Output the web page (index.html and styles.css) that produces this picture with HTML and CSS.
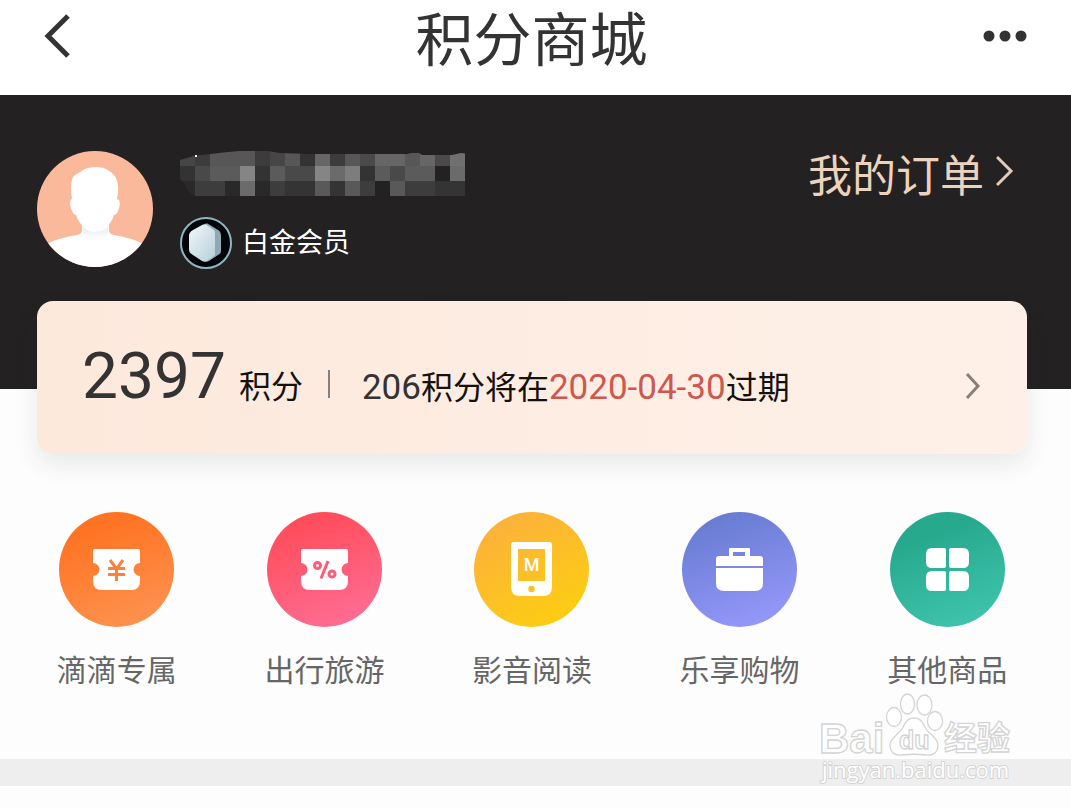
FILE: index.html
```html
<!DOCTYPE html>
<html lang="zh-CN">
<head>
<meta charset="utf-8">
<meta name="viewport" content="width=device-width, initial-scale=1">
<title>积分商城</title>
<link rel="stylesheet" href="styles.css">
</head>
<body>
<header class="topbar">
  <button class="icon-btn back" type="button" aria-label="返回">
    <svg width="28" height="46" viewBox="0 0 28 46" fill="none" stroke="#333" stroke-width="5"><path d="M24 3 4 23l20 20"/></svg>
  </button>
  <h1 class="title">积分商城</h1>
  <button class="icon-btn" type="button" aria-label="更多">
    <svg width="44" height="14" viewBox="0 0 44 14" fill="#333"><circle cx="6" cy="7" r="5.5"/><circle cx="22" cy="7" r="5.5"/><circle cx="38" cy="7" r="5.5"/></svg>
  </button>
</header>

<main class="page">
  <section class="hero">
    <svg class="avatar" viewBox="0 0 116 116" role="img" aria-label="头像">
      <defs>
        <clipPath id="avatar-clip"><circle cx="58" cy="58" r="58"/></clipPath>
        <linearGradient id="neck" x1="0" y1="0" x2="0" y2="1"><stop offset="0" stop-color="#e6edf1"/><stop offset="1" stop-color="#fff"/></linearGradient>
      </defs>
      <g clip-path="url(#avatar-clip)">
        <rect width="116" height="116" fill="#fab99b"/>
        <path fill="#fff" d="M45 70v9c0 3-1 4-5 5-11 2-21 4-30 9v23h96V93c-9-5-18-7-29-9-4-1-5-2-5-5v-9z"/>
        <path fill="url(#neck)" d="M46 76c8 6 17 6 25 0v8c-8 6-17 6-25 0z"/>
        <path fill="#fff" d="M35 48c-1-8-2-18 2-23 3-3 6-3 9-6 9-5 22-4 29 3 7 6 7 17 5 26 4 1 3 7 1 12-1 3-3 4-4 4-2 6-5 10-9 13-6 5-14 5-20 0-4-3-7-7-9-13-1 0-3-1-4-4-2-5-3-11 0-12z"/>
      </g>
    </svg>
    <div class="user">
      <svg class="masked-name" viewBox="0 0 285 45" role="img" aria-label="用户名已隐藏" shape-rendering="crispEdges">
        <clipPath id="mask-edge"><path d="M0 9 14 5l16-2 18-2 12-1h28l12 2 30 1h97l4-1h8l3 2h30l9-2 14 2v42H15L8 40 4 32 0 28z"/></clipPath>
        <g clip-path="url(#mask-edge)" fill="none" stroke-width="15">
          <g>
            <path stroke="#474647" d="M0 7.5h15M90 7.5h15"/><path stroke="#3d3c3d" d="M15 7.5h15M75 7.5h15M150 7.5h15"/><path stroke="#585758" d="M30 7.5h45M105 7.5h15M165 7.5h15M225 7.5h15"/><path stroke="#343334" d="M120 7.5h15"/><path stroke="#666" d="M135 7.5h15M195 7.5h30M240 7.5h15"/><path stroke="#4b4a4b" d="M180 7.5h15M255 7.5h15"/><path stroke="#707070" d="M270 7.5h15"/>
          </g>
          <g>
            <path stroke="#343334" d="M0 22.5h15M75 22.5h15M180 22.5h15"/><path stroke="#4a494a" d="M15 22.5h15M105 22.5h30M210 22.5h15"/><path stroke="#5c5b5c" d="M30 22.5h30M90 22.5h15M195 22.5h15M225 22.5h30"/><path stroke="#868586" d="M60 22.5h15M135 22.5h15"/><path stroke="#6c6b6c" d="M150 22.5h15M270 22.5h15"/><path stroke="#7e7d7e" d="M165 22.5h15"/>
          </g>
          <g>
            <path stroke="#2a292a" d="M0 37.5h15M45 37.5h15M75 37.5h15"/><path stroke="#3e3d3e" d="M15 37.5h30M90 37.5h15M180 37.5h15M225 37.5h30"/><path stroke="#6c6b6c" d="M60 37.5h15"/><path stroke="#353435" d="M105 37.5h30M150 37.5h15M255 37.5h30"/><path stroke="#5a595a" d="M135 37.5h15M165 37.5h15M210 37.5h15"/>
          </g>
        </g>
        <rect x="15" y="4" width="2" height="2" fill="#fff"/>
      </svg>
      <div class="level">
        <svg class="badge" viewBox="0 0 52 52" aria-hidden="true">
          <defs><linearGradient id="gem" x1="0" y1="0" x2="1" y2="1"><stop offset="0" stop-color="#f2f7f9"/><stop offset="1" stop-color="#b5d0da"/></linearGradient></defs>
          <circle cx="26" cy="26" r="25" fill="#020408" stroke="#8db5c3" stroke-width="2"/>
          <path fill="#8fa9b5" d="M25 7c2-1 3 0 5 1l8 5c2 1 3 3 3 6v15c0 2-1 3-3 4l-9 6c-2 1-3 1-5 0z"/>
          <path fill="#c5d6dd" d="m29 9 6 5v24l-6 5z"/>
          <path fill="url(#gem)" d="M22 8c2-1 4-1 6 1l5 4c2 1 2 3 2 5v16c0 2-1 4-3 5l-5 5c-2 1-3 1-5 0l-9-6c-3-2-4-3-4-6V19c0-3 1-4 4-6z"/>
        </svg>
        <span>白金会员</span>
      </div>
    </div>
    <a class="orders" href="#orders">我的订单
      <svg width="18" height="32" viewBox="0 0 18 32" fill="none" stroke="#e5ccba" stroke-width="3"><path d="m1 2 14 14L1 30"/></svg>
    </a>
  </section>

  <a class="points" href="#points">
    <strong class="balance">2397</strong>
    <span class="unit">积分</span>
    <span class="divider"></span>
    <span class="expiry"><span class="digits">206</span>积分将在<time class="digits date" datetime="2020-04-30">2020-04-30</time>过期</span>
    <svg class="chevron" width="16" height="28" viewBox="0 0 16 28" fill="none" stroke="#86807b" stroke-width="3"><path d="m2 2 11 12L2 26"/></svg>
  </a>

  <nav class="categories" aria-label="商品分类">
    <a class="category" href="#didi">
      <svg class="disc orange" viewBox="0 0 115 115" aria-hidden="true">
        <path fill="#fff" d="M36 37h43q2 0 2 2v12a6.500 6.500 0 0 0 0 13v5q0 9-9 9H43q-9 0-9-9v-5a6.500 6.500 0 0 0 0-13V39q0-2 2-2z"/>
        <path fill="none" stroke="#fd8138" stroke-width="3" d="m51 48 6.500 9 6.500-9M49 56.500h17M49 62.500h17M57.500 56v13"/>
      </svg>
      <span>滴滴专属</span>
    </a>
    <a class="category" href="#travel">
      <svg class="disc red" viewBox="0 0 115 115" aria-hidden="true">
        <path fill="#fff" d="M36 37h43q2 0 2 2v12a6.500 6.500 0 0 0 0 13v5q0 9-9 9H43q-9 0-9-9v-5a6.500 6.500 0 0 0 0-13V39q0-2 2-2z"/>
        <g fill="none" stroke="#fd5c76" stroke-width="3"><circle cx="50.500" cy="53.500" r="3"/><circle cx="65" cy="62" r="3"/><path d="m61 49-7 17.500"/></g>
      </svg>
      <span>出行旅游</span>
    </a>
    <a class="category" href="#media">
      <svg class="disc yellow" viewBox="0 0 115 115" aria-hidden="true">
        <path fill="#fff" fill-rule="evenodd" d="M40 30h35q3 0 3 3v42q0 9-9 9H46q-9 0-9-9V33q0-3 3-3zm4 7v32h27V37z"/>
        <circle cx="57.500" cy="77" r="3.200" fill="#fdc024"/>
        <text class="glyph-m" x="57.500" y="59" text-anchor="middle" fill="#fff">M</text>
      </svg>
      <span>影音阅读</span>
    </a>
    <a class="category" href="#shopping">
      <svg class="disc blue" viewBox="0 0 115 115" aria-hidden="true">
        <path fill="#fff" d="M37 44h10v-7q0-1 1-1h19q1 0 1 1v7h10q3 0 3 3v7H34v-7q0-3 3-3zm14 0h12v-4H51zM34 56h47v15q0 8-8 8H42q-8 0-8-8z"/>
      </svg>
      <span>乐享购物</span>
    </a>
    <a class="category" href="#others">
      <svg class="disc green" viewBox="0 0 115 115" aria-hidden="true">
        <path fill="#fff" d="M42 36h12q2 0 2 2v16q0 2-2 2H42q-6 0-6-6v-8q0-6 6-6zM61 36h12q6 0 6 6v8q0 6-6 6H61q-2 0-2-2V38q0-2 2-2zM42 59h12q2 0 2 2v16q0 2-2 2H42q-6 0-6-6v-8q0-6 6-6zM61 59h12q6 0 6 6v8q0 6-6 6H61q-2 0-2-2V61q0-2 2-2z"/>
      </svg>
      <span>其他商品</span>
    </a>
  </nav>
  <div class="band"></div>

  <svg class="watermark" viewBox="0 0 202 100" role="img" aria-label="Baidu 经验 jingyan.baidu.com">
    <g fill="#fff" stroke="#d4d4d4" stroke-width="1.300">
      <text class="wm-latin" x="3" y="63">Bai</text>
      <ellipse cx="78" cy="27" rx="7.500" ry="9.500"/><ellipse cx="91.500" cy="14" rx="7" ry="10"/><ellipse cx="108.500" cy="15" rx="7.500" ry="10"/><ellipse cx="119" cy="31" rx="7.500" ry="9.500"/>
      <path d="M98 28c-8 0-9 6-12 11s-12 9-12 16c0 8 6 11 12 10 8-1 16-1 24 0 6 1 12-2 12-10 0-7-9-11-12-16s-4-11-12-11z"/>
      <text class="wm-du" x="83" y="59">du</text>
      <text class="wm-cjk" x="128" y="60">经验</text>
    </g>
    <text class="wm-url" x="6" y="88" fill="#fff" stroke="#d4d4d4" stroke-width="2" paint-order="stroke">jingyan.baidu.com</text>
  </svg>
</main>
</body>
</html>
```
FILE: styles.css
```css
* { box-sizing: border-box; }

body {
  margin: 0;
  background: #fdfdfd;
  color: #333;
  font-family: Roboto, "Noto Sans CJK SC", sans-serif;
}

a { color: inherit; text-decoration: none; }
svg { display: block; flex: none; }

.topbar {
  display: flex;
  align-items: center;
  justify-content: space-between;
  height: 95px;
  padding: 0 44px 24px 44px;
  background: #fff;
}

.icon-btn {
  width: 44px;
  padding: 0;
  border: 0;
  background: none;
  cursor: pointer;
}

.back { width: 36px; }

.title {
  margin: 0;
  font-family: "Noto Sans CJK SC", sans-serif;
  font-size: 58px;
  font-weight: 400;
  line-height: 68px;
}

.page { position: relative; }

.hero {
  display: flex;
  align-items: flex-start;
  height: 294px;
  padding: 56px 57px 0 37px;
  background: #232122;
}

.avatar { width: 116px; height: 116px; }

.user {
  flex: 1;
  margin: 0 0 0 27px;
}

.masked-name { width: 285px; height: 45px; }

.level {
  display: flex;
  align-items: center;
  gap: 10px;
  margin-top: 21px;
  color: #fff;
  font-size: 27px;
  line-height: 52px;
}

.badge { width: 52px; height: 52px; }

.orders {
  display: flex;
  align-items: center;
  gap: 12px;
  color: #ecd3bf;
  font-size: 44px;
  line-height: 52px;
}

.orders svg { margin-bottom: 12px; }

.points {
  position: relative;
  display: flex;
  align-items: baseline;
  height: 153px;
  margin: -88px 44px 0 37px;
  padding: 38px 46px 0 45px;
  border-radius: 16px;
  background: linear-gradient(90deg, #fde9dc, #fef0e8);
  box-shadow: 0 10px 24px rgba(40, 50, 60, 0.1);
  white-space: nowrap;
}

.balance { font-size: 64px; font-weight: 400; line-height: 76px; }

.unit {
  margin-left: 13px;
  color: #15110e;
  font-size: 32px;
}

.divider {
  width: 2px;
  height: 28px;
  margin: 0 32px 0 25px;
  background: #85807b;
}

.expiry {
  align-self: flex-start;
  margin-top: 25px;
  color: #15110e;
  font-size: 32px;
  line-height: 48px;
}

.digits { color: #333; font-size: 35px; }
.date { color: #cf574f; }

.chevron { align-self: flex-start; margin: 33px 0 0 auto; }

.categories {
  display: grid;
  grid-template-columns: repeat(5, 1fr);
  padding: 58px 20px 66px 13px;
}

.category {
  display: flex;
  flex-direction: column;
  align-items: center;
  gap: 22px;
  color: #666;
  font-size: 30px;
  line-height: 44px;
}

.disc { width: 115px; height: 115px; border-radius: 50%; }
.orange { background: linear-gradient(160deg, #ff7424 20%, #fd9655); }
.red { background: linear-gradient(160deg, #ff4d5c 15%, #ff709a); }
.yellow { background: linear-gradient(150deg, #fcb438 20%, #fdd20a); }
.blue { background: linear-gradient(160deg, #6a7dd4 15%, #9a9bff); }
.green { background: linear-gradient(160deg, #27a98e 25%, #42c8b0); }

.glyph-m { font: 500 18px Roboto, sans-serif; }

.band { height: 27px; background: #eee; }

.watermark {
  position: absolute;
  top: 595px;
  right: 53px;
  width: 202px;
  height: 100px;
}

.wm-latin { font: bold 42px "Liberation Sans", sans-serif; }
.wm-du { font: bold 25px "Liberation Sans", sans-serif; }
.wm-cjk { font: bold 33px "Noto Sans CJK SC", sans-serif; }
.wm-url { font: 22px "Open Sans", sans-serif; }
```
